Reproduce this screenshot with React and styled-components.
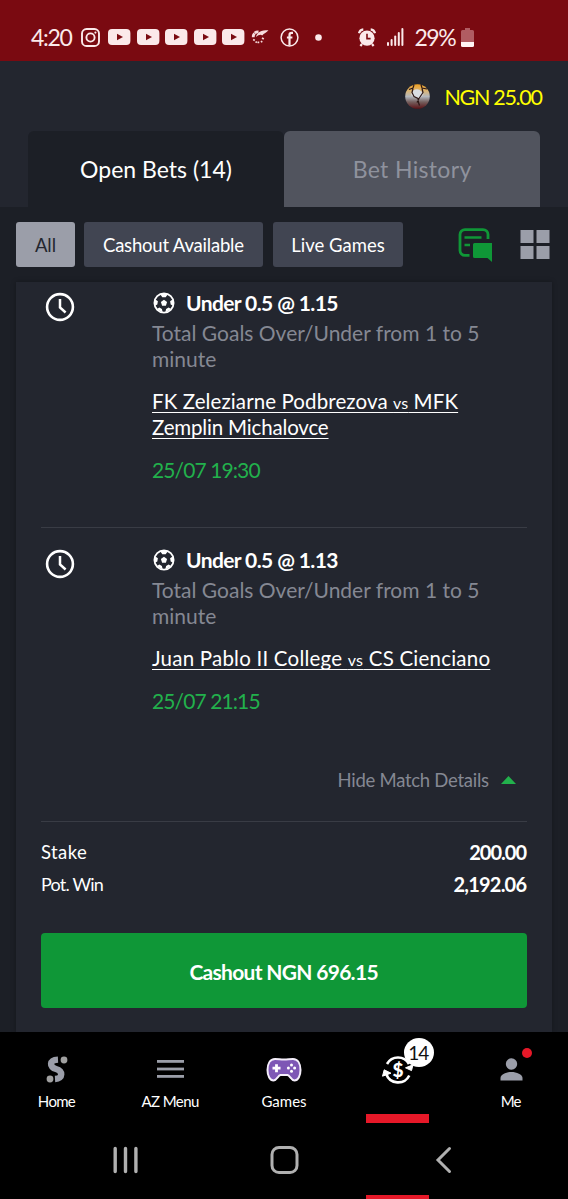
import styled, { createGlobalStyle } from "styled-components";

const GlobalStyle = createGlobalStyle`
  * {
    box-sizing: border-box;
  }
  body {
    margin: 0;
    background: #1c1f26;
    font-family: Lato, "Open Sans", sans-serif;
    color: #fff;
  }
  svg {
    display: block;
    flex-shrink: 0;
  }
`;

const StyledScreen = styled.div`
  width: 568px;
  height: 1199px;
  display: flex;
  flex-direction: column;
  overflow: hidden;
  background: #1c1f26;
`;

const Text = styled.span`
  font-size: ${({ size }) => size}px;
  font-weight: ${({ bold }) => (bold ? 700 : 400)};
  letter-spacing: ${({ track = 0 }) => track}px;
  margin-right: ${({ track = 0 }) => -track}px;
  color: ${({ color = "#fff" }) => color};
  white-space: nowrap;
`;

// status bar
const StyledStatusBar = styled.header`
  height: 61px;
  padding: 13px 0 0 31px;
  display: flex;
  align-items: center;
  background: #7a0a11;
`;

const StyledSlot = styled.div`
  width: ${({ width }) => width}px;
  display: flex;
  align-items: center;
  flex-shrink: 0;
`;

// balance and tabs
const StyledTop = styled.div`
  height: 146px;
  background: #23262f;
  display: flex;
  flex-direction: column;
  justify-content: space-between;
`;

const StyledBalance = styled.div`
  height: 70px;
  padding: 1px 25px 0 0;
  display: flex;
  justify-content: flex-end;
  align-items: center;
  gap: 14px;
`;

const StyledTabs = styled.div`
  display: flex;
  padding: 0 28px;
`;

const StyledTab = styled.div`
  flex: 1;
  height: 76px;
  display: flex;
  align-items: center;
  justify-content: center;
  border-radius: 6px 6px 0 0;
  background: ${({ active }) => (active ? "#1c1f26" : "#51545e")};
`;

// filters
const StyledFilters = styled.div`
  height: 75px;
  padding: 15px 18px 0 16px;
  display: flex;
  align-items: flex-start;
`;

const StyledChip = styled.div`
  width: ${({ width }) => width}px;
  height: 45px;
  margin-right: ${({ gap }) => gap}px;
  display: flex;
  align-items: center;
  justify-content: center;
  border-radius: 3px;
  background: ${({ active }) => (active ? "#9b9ea9" : "#414552")};
`;

const StyledViewIcons = styled.div`
  display: flex;
  align-items: center;
  gap: 27px;
  height: 45px;
  margin-left: auto;
`;

// bet slip
const StyledSlip = styled.main`
  height: 750px;
  margin: 0 16px;
  padding: 0 25px;
  background: #23262f;
  box-shadow: 0 0 5px rgba(0, 0, 0, 0.3);
`;

const StyledBet = styled.article`
  display: grid;
  grid-template-columns: 111px 1fr;
  padding: ${({ pad }) => pad};
  border-top: ${({ divided }) => (divided ? "1px solid #393c45" : "none")};
`;

const StyledClock = styled.div`
  padding: 2px 0 0 4px;
`;

const StyledPick = styled.div`
  display: flex;
  align-items: center;
  gap: 11px;
  height: 26px;
  padding-bottom: 1px;
`;

const StyledLines = styled.div`
  margin-top: ${({ top }) => top}px;
  line-height: 26px;
  display: flex;
  flex-direction: column;
  align-items: flex-start;
`;

const TeamLine = styled(Text)`
  text-decoration: underline;
  text-decoration-thickness: 1px;
  text-underline-offset: 3px;
  text-decoration-skip-ink: none;
  small {
    font-size: 16px;
    line-height: 1;
  }
`;

const StyledToggle = styled.div`
  height: 107px;
  padding: 53px 11px 28px 0;
  display: flex;
  align-items: center;
  justify-content: flex-end;
  gap: 12px;
`;

const StyledTotals = styled.div`
  border-top: 1px solid #393c45;
  padding: 14px 0 33px;
`;

const StyledTotalRow = styled.div`
  height: 32px;
  display: flex;
  align-items: center;
  justify-content: space-between;
`;

const StyledCashout = styled.button`
  width: 100%;
  height: 75px;
  padding: 1px 0 0;
  border: 0;
  border-radius: 4px;
  background: #0f9737;
  font-family: inherit;
`;

// bottom navigation
const StyledNav = styled.nav`
  height: 91px;
  background: #000;
  display: grid;
  grid-template-columns: repeat(5, 1fr);
`;

const StyledNavItem = styled.div`
  display: flex;
  flex-direction: column;
  align-items: center;
  position: relative;
`;

const StyledNavIcon = styled.div`
  height: 60px;
  padding-top: 15px;
  display: flex;
  align-items: center;
`;

const StyledMarker = styled.div`
  width: 63px;
  height: ${({ height }) => height}px;
  margin-top: auto;
  background: #e61828;
`;

const StyledBadge = styled.div`
  position: absolute;
  left: 63px;
  top: 6px;
  width: 30px;
  height: 29px;
  border-radius: 50%;
  background: #fff;
  display: flex;
  align-items: center;
  justify-content: center;
`;

const StyledDot = styled.div`
  position: absolute;
  left: 68px;
  top: 16px;
  width: 10px;
  height: 10px;
  border-radius: 50%;
  background: #e61828;
`;

const StyledSystemBar = styled.div`
  height: 72px;
  padding: 1px 116px 0 112px;
  background: #000;
  display: grid;
  grid-template-columns: 27px 29px 1fr;
  align-items: center;
  column-gap: 131px;
  svg:last-child {
    justify-self: end;
  }
`;

const StyledEdge = styled.div`
  height: 4px;
  background: #000;
  display: grid;
  grid-template-columns: repeat(5, 1fr);
  justify-items: center;
`;

const StyledEdgeMarker = styled(StyledMarker)`
  grid-column: 4;
`;

const InstagramIcon = () => (
  <svg width="19" height="19" viewBox="0 0 19 19" fill="none" stroke="#fbe9ea">
    <rect x="1" y="1" width="17" height="17" rx="4.6" strokeWidth="1.9" />
    <circle cx="9.5" cy="9.5" r="4.1" strokeWidth="1.9" />
    <circle cx="14.4" cy="4.6" r="1.1" fill="#fbe9ea" stroke="none" />
  </svg>
);

const YoutubeIcon = () => (
  <svg width="23" height="16" viewBox="0 0 23 16">
    <rect width="22.4" height="16" rx="4" fill="#fbe9ea" />
    <path d="M9 4.7v6.6l6-3.3z" fill="#7a0a11" />
  </svg>
);

const SwirlIcon = () => (
  <svg width="18" height="14" viewBox="0 0 18 14" fill="none" stroke="#f6dcdd">
    <path d="M7.5 2C4 1.7 2.2 4 2.2 7.600" strokeWidth="2.8" strokeDasharray="4 .5" />
    <path d="M2.2 9.300l1.5 1.2M4.7 11.400l1 1.300M7.4 11.500v1.800M10.2 10.800l.8 1.500M11 8l1.8 1" strokeWidth="1.7" />
    <path d="M5 7C6 2 10 .2 17.500.2 15.500 2.800 13 3 11.200 5.400 9.600 4 7.500 5 5 7z" fill="#f6dcdd" stroke="none" />
  </svg>
);

const FacebookIcon = () => (
  <svg width="19" height="19" viewBox="0 0 19 19" fill="none" stroke="#fbe9ea">
    <circle cx="9.5" cy="9.5" r="8.4" strokeWidth="1.5" />
    <path d="M13 4.900h-1.300c-1.600 0-2.200.8-2.200 2.200V17.500M6.900 9.500h5.500" strokeWidth="2.200" />
  </svg>
);

const AlarmIcon = () => (
  <svg width="18" height="19" viewBox="0 0 18 19" fill="none">
    <circle cx="9" cy="10.2" r="7.6" fill="#fbe9ea" />
    <path d="M1 5.200C1.500 3 3.200 1.500 5.300 1.300M17 5.200C16.500 3 14.800 1.500 12.700 1.300M4 16l-1.600 2M14 16l1.600 2" stroke="#fbe9ea" strokeWidth="2.2" />
    <path d="M9 5.800v4.800h3.600" stroke="#7a0a11" strokeWidth="1.6" />
  </svg>
);

const SignalIcon = () => (
  <svg width="17" height="18" viewBox="0 0 17 18" fill="#fbe9ea">
    <rect x="0" y="14" width="2" height="4" rx="1" />
    <rect x="3.6" y="11" width="2" height="7" rx="1" />
    <rect x="7.2" y="7.5" width="2" height="10.5" rx="1" />
    <rect x="10.8" y="4" width="2" height="14" rx="1" />
    <rect x="14.4" y="0" width="2" height="18" rx="1" />
  </svg>
);

const BatteryIcon = () => (
  <svg width="13" height="19" viewBox="0 0 13 19">
    <path d="M4 0h5v2h2.500q1.500 0 1.500 1.500V14H0V3.500Q0 2 1.500 2H4z" fill="#b05c62" />
    <path d="M0 14h13v3.500q0 1.500-1.500 1.500h-10Q0 19 0 17.500z" fill="#fff4f4" />
  </svg>
);

const AvatarIcon = () => (
  <svg width="25" height="25" viewBox="0 0 25 25">
    <defs>
      <linearGradient id="sky" x1="0" y1="0" x2="0" y2="1">
        <stop offset="0" stopColor="#f0a020" />
        <stop offset=".28" stopColor="#d9b577" />
        <stop offset=".5" stopColor="#b4b8bd" />
        <stop offset=".72" stopColor="#75605f" />
        <stop offset="1" stopColor="#5a1216" />
      </linearGradient>
    </defs>
    <circle cx="12.5" cy="12.5" r="12.3" fill="url(#sky)" />
    <path d="M8 6.500q5-3 8.500 1l2 3-4.500 4.500-5-2-3-2z" fill="#d9dde2" />
    <path d="M9 1l-1 3-4 1.500M16 .8l1 3.200 5 1M8 4.500l-1 4 2 4 4 2 .5 4 1 3M17 4.500l1 4-4 6-2 4" fill="none" stroke="#2c1715" strokeWidth="1.2" />
  </svg>
);

const ChatIcon = () => (
  <svg width="35" height="34" viewBox="0 0 35 34" fill="none" stroke="#0f9737" strokeWidth="2.8">
    <path d="M11.500 27.400H7a5 5 0 0 1-5-5V6.600a5 5 0 0 1 5-5h18a5 5 0 0 1 5 5V11" />
    <path d="M6.500 9.500h17M6.500 17h5.500" strokeWidth="2.4" />
    <path d="M16.500 15H34v19l-4.500-4H16.500a1.500 1.500 0 0 1-1.500-1.500v-12a1.500 1.500 0 0 1 1.500-1.500z" fill="#0f9737" stroke="none" />
  </svg>
);

const GridIcon = () => (
  <svg width="30" height="29" viewBox="0 0 30 29" fill="#9b9ea9">
    <rect x="0.5" width="13" height="13" />
    <rect x="16.5" width="13" height="13" />
    <rect x="0.5" y="16" width="13" height="13" />
    <rect x="16.5" y="16" width="13" height="13" />
  </svg>
);

const ClockIcon = () => (
  <svg width="30" height="30" viewBox="0 0 30 30" fill="none" stroke="#fff">
    <circle cx="15" cy="15" r="12.9" strokeWidth="2.6" />
    <path d="M15 7v8.500l5.600 5" strokeWidth="2.5" />
  </svg>
);

const BallIcon = () => (
  <svg width="23" height="22" viewBox="1 0 23 22" fill="none" stroke="#fff">
    <circle cx="13" cy="11" r="9.6" strokeWidth="1.8" />
    <path d="M13 7.800l3.100 2.300-1.200 3.600h-3.800l-1.200-3.600z" fill="#fff" stroke="none" />
    <path d="M9 2h8l-2.300 3.200H11.300zM22.300 7l.3 7-2.900-1.600-.6-3.200zM3.700 7l-.3 7 2.900-1.600.6-3.200zM5.800 17l6 3.800-.9-3.700-2.500-1.600zM20.200 17l-6 3.800.9-3.700 2.500-1.600z" fill="#fff" stroke="none" />
  </svg>
);

const HomeIcon = () => (
  <svg width="22" height="27" viewBox="0 0 22 27" fill="none">
    <path d="M12 3.600C3 4 3.200 11.200 10 13s7.500 9.500-1 10" stroke="#9b9ea9" strokeWidth="6.4" />
    <circle cx="18" cy="4" r="3.4" fill="#a0a0a0" />
    <circle cx="4" cy="23" r="3.4" fill="#a0a0a0" />
  </svg>
);

const MenuIcon = () => (
  <svg width="27" height="19" viewBox="0 0 27 19" fill="#9b9ea9">
    <rect width="27" height="2.8" />
    <rect y="7.6" width="27" height="2.8" />
    <rect y="15" width="27" height="2.8" />
  </svg>
);

const GamepadIcon = () => (
  <svg width="36" height="25" viewBox="0 0 36 25">
    <path d="M9 2C13 2 14 2.500 18 2.500S23 2 27 2C32 2 34.500 7 34.500 13 34.500 19 32 23.500 28.500 23.500 25 23.500 24 18.500 21.500 18H14.500C12 18.500 11 23.500 7.500 23.500 4 23.500 1.500 19 1.500 13 1.500 7 4 2 9 2z" fill="#7e57b5" stroke="#f4eefa" strokeWidth="2" />
    <path d="M10.500 7.200v8M6.500 11.200h8" stroke="#fff" strokeWidth="2.8" />
    <g fill="#fff">
      <circle cx="25.5" cy="8" r="1.5" />
      <circle cx="25.5" cy="14.2" r="1.5" />
      <circle cx="22.4" cy="11.1" r="1.5" />
      <circle cx="28.6" cy="11.1" r="1.5" />
    </g>
  </svg>
);

const BetsIcon = () => (
  <svg width="34" height="30" viewBox="0 0 34 30" fill="none" stroke="#fff" strokeWidth="2.600">
    <path d="M6 9A12.600 12.600 0 0 1 28 9" />
    <path d="M5.200 19A12.600 12.600 0 0 0 28.300 20.500" />
    <path d="M3.200 14.800l6.800 3.400-8.500 3zM24.500 12.800l7.500-3-1.500 5.800z" fill="#fff" strokeWidth="1" />
    <text x="17" y="22" textAnchor="middle" fontSize="19" fontWeight="900" fill="#fff" stroke="none">$</text>
  </svg>
);

const PersonIcon = () => (
  <svg width="23" height="23" viewBox="0 0 23 23" fill="#9b9ea9">
    <circle cx="11.5" cy="6" r="5.7" />
    <path d="M.5 22.600V20C.5 16.500 6.500 14 11.500 14s11 2.500 11 6v2.600z" />
  </svg>
);

const RecentsIcon = () => (
  <svg width="27" height="28" viewBox="0 0 27 28" stroke="#b0b0b0" strokeWidth="3.4" strokeLinecap="round">
    <path d="M3.200 2.500v23M13.500 2.500v23M23.900 2.500v23" />
  </svg>
);

const SystemHomeIcon = () => (
  <svg width="29" height="28" viewBox="0 0 29 28" fill="none" stroke="#b0b0b0" strokeWidth="3">
    <rect x="2" y="1.5" width="25" height="25" rx="7" />
  </svg>
);

const BackIcon = () => (
  <svg width="17" height="28" viewBox="0 0 17 28" fill="none" stroke="#b0b0b0" strokeWidth="3" strokeLinecap="round">
    <path d="M14.500 2.500L3 14l11.500 11.500" />
  </svg>
);

const bets = [
  {
    pick: "Under 0.5 @ 1.15",
    teams: [
      { text: <>FK Zeleziarne Podbrezova <small>vs</small> MFK</>, track: 0.1 },
      { text: "Zemplin Michalovce", track: -0.17 },
    ],
    date: "25/07 19:30",
    pad: "8px 0 44px",
  },
  {
    pick: "Under 0.5 @ 1.13",
    teams: [{ text: <>Juan Pablo II College <small>vs</small> CS Cienciano</>, track: 0.22 }],
    date: "25/07 21:15",
    pad: "19px 0 0",
  },
];

const Bet = ({ bet, divided }) => (
  <StyledBet pad={bet.pad} divided={divided}>
    <StyledClock>
      <ClockIcon />
    </StyledClock>
    <div>
      <StyledPick>
        <BallIcon />
        <Text size={21} track={-0.6} bold>{bet.pick}</Text>
      </StyledPick>
      <StyledLines top={4}>
        <Text size={21} color="#858893">Total Goals Over/Under from 1 to 5</Text>
        <Text size={21} color="#858893">minute</Text>
      </StyledLines>
      <StyledLines top={16}>
        {bet.teams.map((team, idx) => (
          <TeamLine key={idx} size={20.5} track={team.track}>{team.text}</TeamLine>
        ))}
      </StyledLines>
      <StyledLines top={17}>
        <Text size={21} track={-0.9} color="#22b14c">{bet.date}</Text>
      </StyledLines>
    </div>
  </StyledBet>
);

const App = () => (
  <StyledScreen>
    <GlobalStyle />
    <StyledStatusBar>
      <StyledSlot width={50}>
        <Text size={23} track={-1.3} color="#fbe9ea">4:20</Text>
      </StyledSlot>
      <StyledSlot width={27}>
        <InstagramIcon />
      </StyledSlot>
      {[1, 2, 3, 4, 5].map((n) => (
        <StyledSlot key={n} width={28.5}>
          <YoutubeIcon />
        </StyledSlot>
      ))}
      <StyledSlot width={29}>
        <SwirlIcon />
      </StyledSlot>
      <StyledSlot width={35}>
        <FacebookIcon />
      </StyledSlot>
      <StyledSlot width={43}>
        <svg width="7" height="7">
          <circle cx="3.5" cy="3.5" r="3.3" fill="#fbe9ea" />
        </svg>
      </StyledSlot>
      <StyledSlot width={29.5}>
        <AlarmIcon />
      </StyledSlot>
      <StyledSlot width={27.5}>
        <SignalIcon />
      </StyledSlot>
      <StyledSlot width={46.5}>
        <Text size={23} track={-1.5} color="#fbe9ea">29%</Text>
      </StyledSlot>
      <BatteryIcon />
    </StyledStatusBar>

    <StyledTop>
      <StyledBalance>
        <AvatarIcon />
        <Text size={21.5} track={-1.3} color="#ffff00">NGN 25.00</Text>
      </StyledBalance>
      <StyledTabs>
        <StyledTab active>
          <Text size={23}>Open Bets (14)</Text>
        </StyledTab>
        <StyledTab>
          <Text size={23} track={0.35} color="#8f929d">Bet History</Text>
        </StyledTab>
      </StyledTabs>
    </StyledTop>

    <StyledFilters>
      <StyledChip width={59} gap={9} active>
        <Text size={18.5} color="#23262f">All</Text>
      </StyledChip>
      <StyledChip width={179} gap={10}>
        <Text size={18.5} track={-0.2}>Cashout Available</Text>
      </StyledChip>
      <StyledChip width={130} gap={0}>
        <Text size={18.5}>Live Games</Text>
      </StyledChip>
      <StyledViewIcons>
        <ChatIcon />
        <GridIcon />
      </StyledViewIcons>
    </StyledFilters>

    <StyledSlip>
      {bets.map((bet, idx) => (
        <Bet key={idx} bet={bet} divided={idx > 0} />
      ))}
      <StyledToggle>
        <Text size={18.5} track={-0.27} color="#858893">Hide Match Details</Text>
        <svg width="15" height="8">
          <path d="M0 8L7.500 0 15 8z" fill="#22b14c" />
        </svg>
      </StyledToggle>
      <StyledTotals>
        <StyledTotalRow>
          <Text size={18.5} track={0.4}>Stake</Text>
          <Text size={20} track={-1} bold>200.00</Text>
        </StyledTotalRow>
        <StyledTotalRow>
          <Text size={18} track={-0.8}>Pot. Win</Text>
          <Text size={20} track={-0.8} bold>2,192.06</Text>
        </StyledTotalRow>
      </StyledTotals>
      <StyledCashout>
        <Text size={21} track={-0.7} bold>Cashout NGN 696.15</Text>
      </StyledCashout>
    </StyledSlip>

    <StyledNav>
      <StyledNavItem>
        <StyledNavIcon>
          <HomeIcon />
        </StyledNavIcon>
        <Text size={15} track={-0.7}>Home</Text>
      </StyledNavItem>
      <StyledNavItem>
        <StyledNavIcon>
          <MenuIcon />
        </StyledNavIcon>
        <Text size={15} track={-0.6}>AZ Menu</Text>
      </StyledNavItem>
      <StyledNavItem>
        <StyledNavIcon>
          <GamepadIcon />
        </StyledNavIcon>
        <Text size={15}>Games</Text>
      </StyledNavItem>
      <StyledNavItem>
        <StyledNavIcon>
          <BetsIcon />
        </StyledNavIcon>
        <StyledBadge>
          <Text size={19} track={-1} color="#111">14</Text>
        </StyledBadge>
        <StyledMarker height={9} />
      </StyledNavItem>
      <StyledNavItem>
        <StyledNavIcon>
          <PersonIcon />
        </StyledNavIcon>
        <StyledDot />
        <Text size={15} track={-0.9}>Me</Text>
      </StyledNavItem>
    </StyledNav>
    <StyledSystemBar>
      <RecentsIcon />
      <SystemHomeIcon />
      <BackIcon />
    </StyledSystemBar>
    <StyledEdge>
      <StyledEdgeMarker height={4} />
    </StyledEdge>
  </StyledScreen>
);

export default App;
